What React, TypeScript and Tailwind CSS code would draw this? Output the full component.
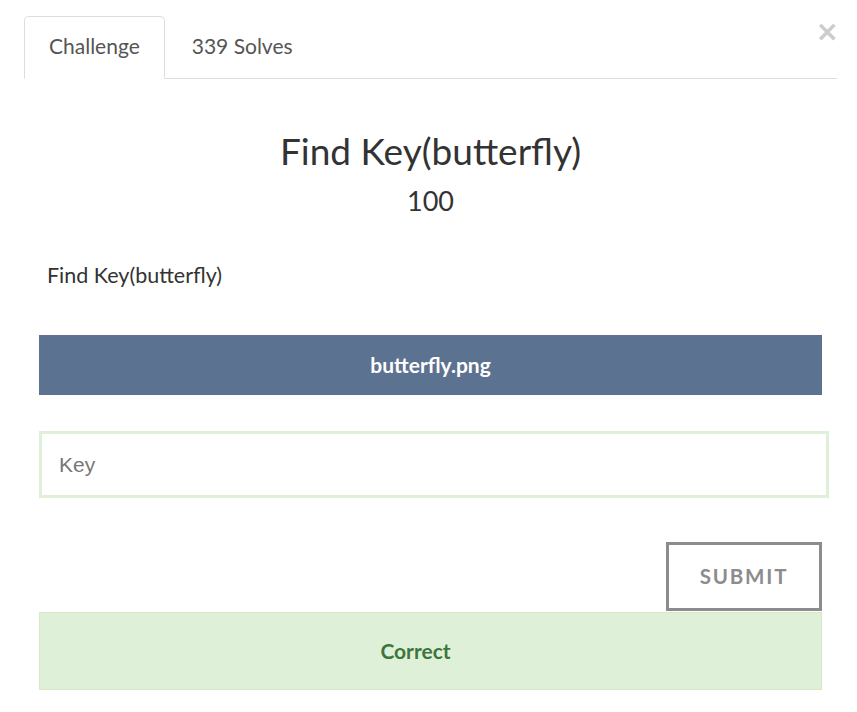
import React from "react";

export default function App() {
  return (
    <div className="w-[857px] h-[712px] bg-white font-['Lato','Noto_Sans',sans-serif] text-[#333] overflow-hidden">
      <div className="pl-6 pr-5 pt-4">
        <div className="flex items-start border-b border-[#dddddd]">
          <div className="flex">
            <div className="h-[63px] -mb-px px-6 pb-[4px] flex items-center border border-[#dddddd] border-b-white rounded-t-[5px] bg-white text-[21px] text-[#555]">
              Challenge
            </div>
            <div className="h-[63px] -mb-px ml-[2px] px-6 pb-[4px] flex items-center border border-transparent text-[21px] text-[#555]">
              339 Solves
            </div>
          </div>
          <div className="flex-1" />
          <button className="mt-[6px] mr-[-2px] text-[28px] leading-[20px] font-bold text-[#cccccc] font-['DejaVu_Sans',sans-serif]">
            ×
          </button>
        </div>
      </div>

      <div className="pl-[39px] pr-[35px]">
        <div className="text-center mt-[49px] text-[37px] leading-[46px] text-[#333]">Find Key(butterfly)</div>
        <div className="text-center mt-[11px] text-[27px] leading-[32px] text-[#333]">100</div>
        <div className="mt-[45px] pl-2 text-[21.5px] leading-[26px] text-[#333]">Find Key(butterfly)</div>

        <div className="mt-[47px] h-[60px] bg-[#5b7290] flex items-center justify-center text-white font-bold text-[21px]">
          butterfly.png
        </div>

        <div className="mt-[36px] mr-[-7px] h-[67px] border-[3px] border-[#dff0d8] flex items-center pl-[17px] font-['Liberation_Sans',sans-serif] text-[21px] text-[#777]">
          Key
        </div>

        <div className="mt-[44px] mb-[1px] flex justify-end">
          <div className="w-[156px] h-[69px] border-[3px] border-[#8c8c8c] flex items-center justify-center text-[20.5px] font-bold tracking-[1.8px] text-[#8c8c8c]">
            SUBMIT
          </div>
        </div>

        <div className="h-[78px] bg-[#dff0d8] border border-[#d6e9c6] flex items-center justify-center pr-[30px] text-[21px] font-bold text-[#3c763d]">
          Correct
        </div>
      </div>
    </div>
  );
}
